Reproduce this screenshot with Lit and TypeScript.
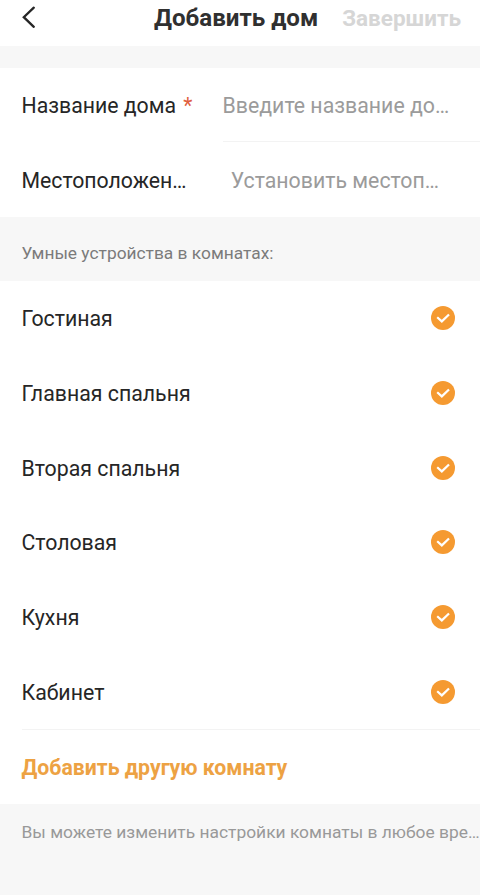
import { LitElement, html, css, svg } from 'lit';
import { customElement, property, state } from 'lit/decorators.js';

const checkIcon = svg`
    <circle cx="12" cy="12" r="12" fill="#f59a31"></circle>
    <path d="M6.2 11.3 L10.8 15.4 L18 8.5" fill="none" stroke="#fff" stroke-width="2.2"></path>
`;

@customElement('room-row')
export class RoomRow extends LitElement {
    @property() name = '';
    @property({ type: Boolean }) selected = false;

    static styles = css`
        :host {
            display: flex;
            align-items: center;
            justify-content: space-between;
            height: 74.7px;
            padding: 0 25.5px 0 21.5px;
            box-sizing: border-box;
            font-size: 21.3px;
            color: #262626;
        }
        .name {
            padding-top: 1px;
        }
        .check {
            display: block;
            width: 24px;
            height: 24px;
        }
    `;

    render() {
        return html`
            <span class="name">${this.name}</span>
            ${this.selected ? html`<svg class="check" viewBox="0 0 24 24">${checkIcon}</svg>` : ''}
        `;
    }
}

@customElement('app-root')
export class AppRoot extends LitElement {
    @state() rooms = ['Гостиная', 'Главная спальня', 'Вторая спальня', 'Столовая', 'Кухня', 'Кабинет'];

    static styles = css`
        :host {
            display: flex;
            flex-direction: column;
            height: 895px;
            overflow: hidden;
            background: #f7f7f7;
            font-family: Roboto, sans-serif;
            color: #262626;
            white-space: nowrap;
        }
        .header {
            display: flex;
            align-items: center;
            height: 46px;
            box-sizing: border-box;
            padding: 0 19px 10px 20px;
            background: #fff;
            font-size: 24.1px;
            font-weight: 700;
            color: #303030;
        }
        .back {
            width: 18px;
            height: 24px;
            margin-top: -3px;
        }
        .title {
            margin-left: 116px;
        }
        .done {
            margin-left: auto;
            font-size: 22.5px;
            color: #d6d6d6;
        }
        .form {
            margin-top: 22px;
            height: 149px;
            background: #fff;
        }
        .field {
            display: flex;
            height: 74px;
            font-size: 21.3px;
            line-height: 75px;
            padding-left: 21.5px;
        }
        .field + .field {
            line-height: 77px;
        }
        .field + .field .label {
            line-height: 78px;
        }
        .label {
            width: 201px;
            font-size: 21.25px;
        }
        .required {
            margin-left: 2px;
            color: #e0603f;
        }
        .value {
            flex: 1;
            color: #9b9b9b;
            border-bottom: 1px solid #f3f3f3;
        }
        .location {
            padding-left: 8.3px;
            border-bottom: none;
        }
        .caption {
            height: 64px;
            line-height: 73px;
            padding-left: 21.5px;
            font-size: 17.35px;
            color: #7b7b7b;
        }
        .rooms {
            height: 523px;
            background: #fff;
        }
        .add {
            margin-left: 21.5px;
            border-top: 1px solid #f3f3f3;
            line-height: 76px;
            font-size: 21.25px;
            font-weight: 700;
            color: #eda243;
        }
        .note {
            padding-left: 21.5px;
            line-height: 57px;
            font-size: 17.4px;
            color: #999;
        }
    `;

    render() {
        return html`
            <div class="header">
                <svg class="back" viewBox="0 0 18 24">
                    <path d="M13.8 2.7 L3.8 12.2 L13.8 21.8" fill="none" stroke="#262626" stroke-width="2.3" stroke-linecap="round"></path>
                </svg>
                <span class="title">Добавить дом</span>
                <span class="done">Завершить</span>
            </div>
            <div class="form">
                <div class="field">
                    <span class="label">Название дома <span class="required">*</span></span>
                    <span class="value">Введите название до…</span>
                </div>
                <div class="field">
                    <span class="label">Местоположен…</span>
                    <span class="value location">Установить местоп…</span>
                </div>
            </div>
            <div class="caption">Умные устройства в комнатах:</div>
            <div class="rooms">
                ${this.rooms.map((room) => html`<room-row name=${room} selected></room-row>`)}
                <div class="add">Добавить другую комнату</div>
            </div>
            <div class="note">Вы можете изменить настройки комнаты в любое вре…</div>
        `;
    }
}
